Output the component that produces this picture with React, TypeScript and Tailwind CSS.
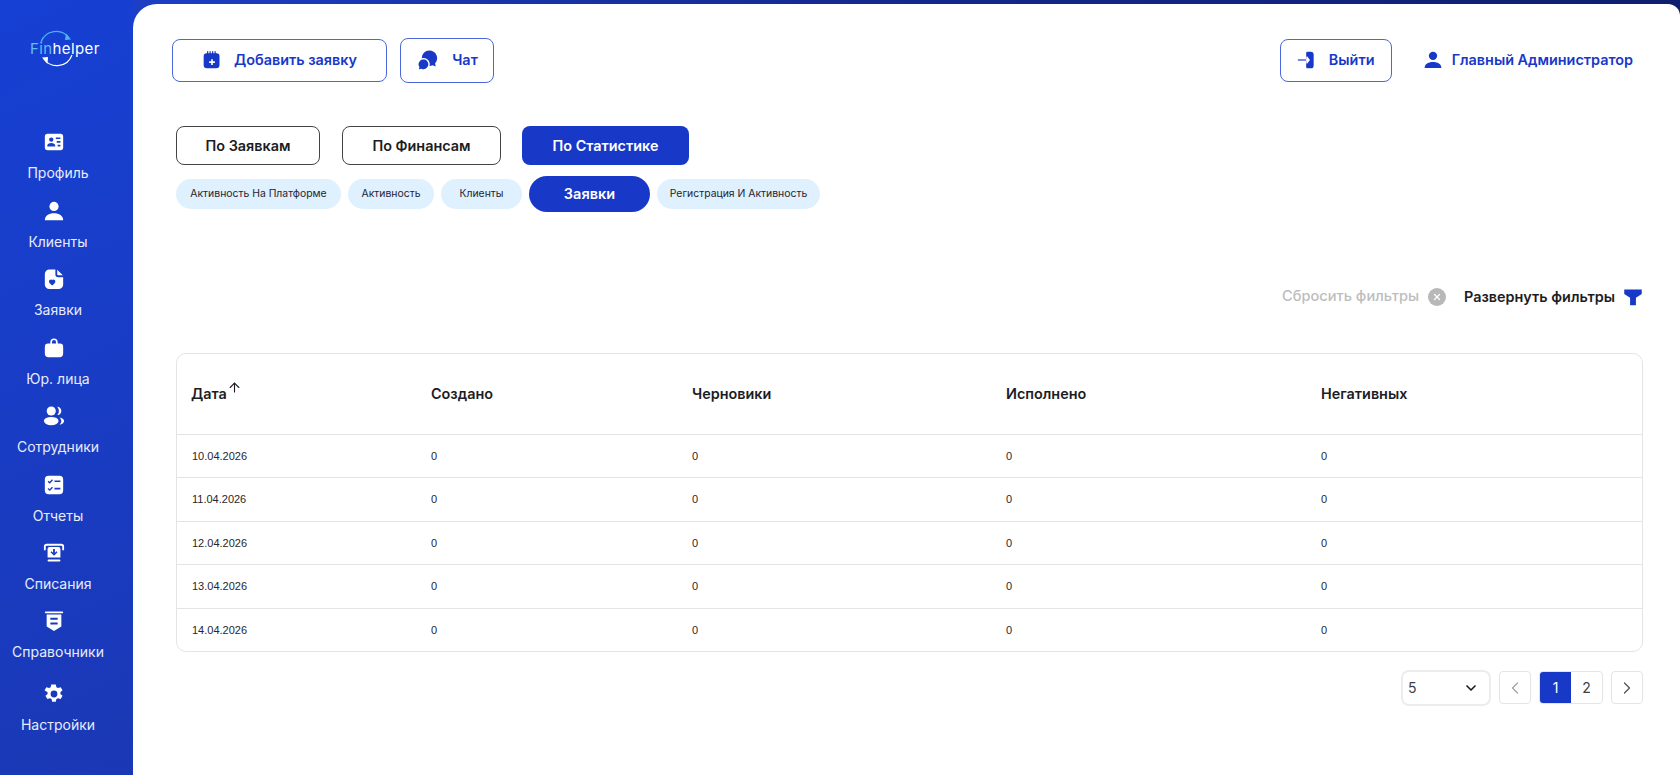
import { ArrowUp, ChevronDown, ChevronLeft, ChevronRight, X } from "lucide-react";
import type { ReactNode } from "react";

const fill = "#1838c8";

function Ico({ children, className = "w-6 h-6", color = "white" }: { children: ReactNode; className?: string; color?: string }) {
  return (
    <svg viewBox="0 0 24 24" className={className} fill={color}>
      {children}
    </svg>
  );
}

const navItems: { label: string; icon: ReactNode; h: string }[] = [
  {
    label: "Профиль",
    h: "h-[69px]",
    icon: (
      <path
        fillRule="evenodd"
        d="M5 3h14a3 3 0 0 1 3 3v12a3 3 0 0 1-3 3H5a3 3 0 0 1-3-3V6a3 3 0 0 1 3-3Zm4 4a2.4 2.4 0 1 0 0 4.8A2.4 2.4 0 0 0 9 7Zm0 6c-2.5 0-4.3 1.2-4.3 3v1h8.6v-1c0-1.8-1.8-3-4.3-3Zm5-6v1.8h5V7h-5Zm1 4v1.8h4V11h-4Zm1 4v1.8h3V15h-3Z"
      />
    ),
  },
  {
    label: "Клиенты",
    h: "h-[68px]",
    icon: (
      <>
        <circle cx="12" cy="7" r="5" />
        <path d="M2 22c0-4.8 4.5-7.500 10-7.500S22 17.200 22 22H2Z" />
      </>
    ),
  },
  {
    label: "Заявки",
    h: "h-[69px]",
    icon: (
      <path
        fillRule="evenodd"
        d="M7 1.500h6.500V7a3 3 0 0 0 3 3H22v8a5 5 0 0 1-5 5H7a5 5 0 0 1-5-5V6.500a5 5 0 0 1 5-5Zm8.500.4L21.600 8h-5a1.100 1.100 0 0 1-1.100-1.100v-5ZM9 12.500c-1.500 0-2.500 1-2.500 2.300 0 1.900 2.300 3.500 3.500 4.200 1.200-.7 3.500-2.300 3.500-4.200 0-1.300-1-2.300-2.300-2.300-.5 0-.9.200-1.200.500-.3-.3-.5-.5-1-.5Z"
      />
    ),
  },
  {
    label: "Юр. лица",
    h: "h-[68px]",
    icon: (
      <path d="M8 7V5.500a4 4 0 0 1 8 0V7h2.500A3.500 3.500 0 0 1 22 10.500V18a4 4 0 0 1-4 4H6a4 4 0 0 1-4-4v-7.500A3.500 3.500 0 0 1 5.500 7H8Zm1.800 0h4.400V5.500a2.200 2.200 0 0 0-4.400 0V7Z" />
    ),
  },
  {
    label: "Сотрудники",
    h: "h-[69px]",
    icon: (
      <>
        <circle cx="9" cy="6.500" r="5" />
        <path d="M15.500 2a4.500 4.500 0 0 1 0 9c1.200-1.200 1.800-2.800 1.800-4.500S16.700 3.200 15.500 2Z" />
        <ellipse cx="9" cy="17.500" rx="8" ry="4.500" />
        <path d="M18 13.500c2.800.3 5 1.900 5 4s-2.200 3.700-5 4c1.300-1.100 2-2.500 2-4s-.7-2.900-2-4Z" />
      </>
    ),
  },
  {
    label: "Отчеты",
    h: "h-[68px]",
    icon: (
      <path
        fillRule="evenodd"
        d="M6 2h12a4 4 0 0 1 4 4v12a4 4 0 0 1-4 4H6a4 4 0 0 1-4-4V6a4 4 0 0 1 4-4Zm6.500 5v1.800H19V7h-6.500Zm0 8v1.800H19V15h-6.500ZM9.800 5.800 7.300 8.500 6 7.300 5 8.400l2.400 2.200 3.500-3.700-1.100-1.100Zm0 8-2.500 2.700L6 15.300l-1 1.100 2.400 2.200 3.500-3.700-1.100-1.100Z"
      />
    ),
  },
  {
    label: "Списания",
    h: "h-[68px]",
    icon: (
      <>
        <path d="M4 2h16a3 3 0 0 1 3 3v4h-2V5a1 1 0 0 0-1-1H4a1 1 0 0 0-1 1v4H1V5a3 3 0 0 1 3-3Z" />
        <path
          fillRule="evenodd"
          d="M7 5.500h10a2 2 0 0 1 2 2V17H5V7.500a2 2 0 0 1 2-2Zm4 2v4.200L9.300 10l-1.100 1.100L12 15l3.800-3.900-1.100-1.100-1.700 1.700V7.500h-2Z"
        />
        <rect x="5" y="19.200" width="14" height="2" rx="1" />
      </>
    ),
  },
  {
    label: "Справочники",
    h: "h-[73px]",
    icon: (
      <>
        <rect x="2" y="1.500" width="20" height="2" rx="1" />
        <path
          fillRule="evenodd"
          d="M4 5h16v13l-8 5-8-5V5Zm4 3.500v2.200h8V8.500H8Zm0 5v2.200h8v-2.200H8Z"
        />
      </>
    ),
  },
  {
    label: "Настройки",
    h: "h-[70px]",
    icon: (
      <path
        fillRule="evenodd"
        d="M10 1.500h4l.6 3 1.800 1 2.900-1 2 3.500-2.300 2v2l2.300 2-2 3.500-2.900-1-1.800 1-.6 3h-4l-.6-3-1.800-1-2.900 1-2-3.500 2.300-2v-2L1.700 8l2-3.500 2.900 1 1.800-1 .6-3ZM12 8.300a3.700 3.700 0 1 0 0 7.400 3.700 3.700 0 0 0 0-7.400Z"
      />
    ),
  },
];

const subTabs = [
  { label: "Активность На Платформе", w: "w-[165px]" },
  { label: "Активность", w: "w-[86px]" },
  { label: "Клиенты", w: "w-[81px]" },
];

const rows = ["10.04.2026", "11.04.2026", "12.04.2026", "13.04.2026", "14.04.2026"];

const gridCols = "grid grid-cols-[240px_261px_314px_315px_1fr]";

function Logo() {
  return (
    <div className="relative h-[40px] w-[68px] text-[15px] leading-none tracking-[0.4px]">
      <svg viewBox="0 0 68 40" className="absolute inset-0 h-full w-full" fill="none" strokeWidth="1.200">
        <path d="M11 13A16 16 0 0 1 39 9" stroke="#4cb4f4" />
        <path d="M36 4.500 41 10.500l-6 .5Z" fill="#4cb4f4" />
        <path d="M42 26A16 16 0 0 1 14 30" stroke="white" />
        <path d="M17.500 35 12 28.500l6-.5Z" fill="white" />
      </svg>
      <span className="absolute left-0 top-[12px] whitespace-nowrap font-['Inter',sans-serif] font-normal">
        <span className="text-[#62bdf6]">Fin</span>
        <span className="text-white">helper</span>
      </span>
    </div>
  );
}

function TopButton({ children, className }: { children: ReactNode; className: string }) {
  return (
    <button className={`flex items-center justify-center rounded-lg border border-[#4a68dc] text-[14.4px] font-semibold text-[#1838c8] ${className}`}>
      {children}
    </button>
  );
}

export default function App() {
  return (
    <div className="flex h-[775px] w-[1680px] overflow-hidden bg-gradient-to-br from-[#1640d4] to-[#1c329c] font-['Inter',sans-serif]">
      <aside className="flex w-[133px] shrink-0 flex-col">
        <div className="ml-[30px] mt-[29px] h-[102px]">
          <Logo />
        </div>
        <nav className="flex w-[116px] flex-col items-center">
          {navItems.map((item) => (
            <div key={item.label} className={`flex flex-col items-center ${item.h}`}>
              <Ico className="mr-[8px] h-[22px] w-[22px]">{item.icon}</Ico>
              <span className="mt-[11px] whitespace-nowrap text-[14px] leading-[17px] text-[#e8ecfb]">{item.label}</span>
            </div>
          ))}
        </nav>
      </aside>

      <div className="flex min-w-0 flex-1 flex-col bg-gradient-to-r from-[#1c3fc4] via-[#14288c] to-[#0e1f6e] pt-[4px]">
        <main className="flex-1 rounded-tl-[24px] rounded-tr-[12px] bg-white pl-[39px] pr-[37px] pt-[34px]">
          <header className="flex h-[44px] items-center">
            <TopButton className="h-[43px] w-[215px] gap-[12px]">
              <Ico className="h-[20px] w-[20px]" color={fill}>
                <path
                  fillRule="evenodd"
                  d="M6 1.500h1.500V4H9V1.500h1.500V4H12V1.500h1.500V4H15V1.500h1.500V4h1a3.500 3.500 0 0 1 3.500 3.500V18a4 4 0 0 1-4 4H6a4 4 0 0 1-4-4V7.500A3.500 3.500 0 0 1 5.500 4H6V1.500ZM11 11v2.500H8.500v2H11V18h2v-2.500h2.500v-2H13V11h-2Z"
                />
              </Ico>
              Добавить заявку
            </TopButton>
            <TopButton className="ml-[13px] h-[45px] w-[94px] gap-[14px]">
              <Ico className="h-[22px] w-[22px]" color={fill}>
                <path d="M14.500 1.500a8.500 8.500 0 0 1 6.300 14.200l.7 3.300-3.300-1.200a8.500 8.500 0 0 1-12-7.800 8.500 8.500 0 0 1 8.300-8.500Z" />
                <path stroke="white" strokeWidth="1.600" d="M8 10.500a6.200 6.200 0 0 1 4.700 10.200 6.200 6.200 0 0 1-7.200 1.600l-3.500 1 .9-3.400A6.200 6.200 0 0 1 8 10.500Z" />
              </Ico>
              Чат
            </TopButton>
            <div className="ml-auto flex items-center">
              <TopButton className="h-[43px] w-[112px] gap-[12px]">
                <Ico className="h-[20px] w-[20px]" color={fill}>
                  <path d="M12.500 2h4A3.500 3.500 0 0 1 20 5.500v13a3.500 3.500 0 0 1-3.500 3.500h-4A1.500 1.500 0 0 1 11 20.500V14h1.200l-1.300 1.300 1.200 1.200L15.600 12l-3.500-4.500-1.200 1.200 1.300 1.300H11V3.500A1.500 1.500 0 0 1 12.500 2Z" />
                  <path d="M1 11.300h10v1.400H1z" />
                </Ico>
                Выйти
              </TopButton>
              <Ico className="ml-[31px] h-[20px] w-[20px]" color={fill}>
                <circle cx="12" cy="7" r="5" />
                <path d="M2 21.500c0-4.500 4.500-7 10-7s10 2.500 10 7H2Z" />
              </Ico>
              <span className="ml-[9px] mr-[10px] text-[14.4px] font-semibold text-[#1838c8]">Главный Администратор</span>
            </div>
          </header>

          <div className="ml-[4px] mt-[44px] flex h-[39px]">
            <button className="w-[144px] rounded-lg border border-[#444] text-[14.4px] font-semibold text-[#1c1c24]">По Заявкам</button>
            <button className="ml-[22px] w-[159px] rounded-lg border border-[#444] text-[14.4px] font-semibold text-[#1c1c24]">По Финансам</button>
            <button className="ml-[21px] w-[167px] rounded-lg bg-[#1838c8] text-[14.4px] font-semibold text-white">По Статистике</button>
          </div>

          <div className="ml-[4px] mt-[11px] flex items-center gap-[7px]">
            {subTabs.map((t) => (
              <span key={t.label} className={`flex h-[30px] ${t.w} items-center justify-center whitespace-nowrap rounded-full bg-[#dff0fe] text-[10.4px] text-[#1f2430]`}>
                {t.label}
              </span>
            ))}
            <span className="flex h-[36px] w-[121px] items-center justify-center rounded-full bg-[#1838c8] text-[14.5px] font-semibold text-white">Заявки</span>
            <span className="flex h-[30px] w-[163px] items-center justify-center whitespace-nowrap rounded-full bg-[#dff0fe] text-[10.4px] text-[#1f2430]">
              Регистрация И Активность
            </span>
          </div>

          <div className="mt-[71px] flex h-[28px] items-center justify-end">
            <span className="text-[14.6px] font-medium text-[#bdbdbd]">Сбросить фильтры</span>
            <span className="ml-[9px] flex h-[18px] w-[18px] items-center justify-center rounded-full bg-[#b8b8b8]">
              <X className="h-[10px] w-[10px] text-white" strokeWidth={3} />
            </span>
            <span className="ml-[18px] text-[14.4px] font-semibold text-[#1c1c24]">Развернуть фильтры</span>
            <Ico className="ml-[8px] h-[20px] w-[20px]" color={fill}>
              <path d="M1.500 3h21v5.500L15.500 13v9h-7v-9L1.500 8.500V3Z" />
            </Ico>
          </div>

          <div className="ml-[4px] mt-[42px] overflow-hidden rounded-[10px] border border-[#e4e4e7]">
            <div className={`${gridCols} h-[80px] items-center pl-[14px] text-[14.4px] font-semibold text-[#1c1c24]`}>
              <span className="flex items-start">
                Дата
                <ArrowUp className="-mt-[3px] h-[15px] w-[15px]" strokeWidth={1.8} />
              </span>
              <span>Создано</span>
              <span>Черновики</span>
              <span>Исполнено</span>
              <span>Негативных</span>
            </div>
            {rows.map((date) => (
              <div key={date} className={`${gridCols} h-[43.4px] items-center border-t border-[#e4e4e7] pl-[15px] font-['Liberation_Sans',sans-serif] text-[11px] text-[#27272a]`}>
                <span>{date}</span>
                <span className="-ml-px">0</span>
                <span className="-ml-px">0</span>
                <span className="-ml-px">0</span>
                <span className="-ml-px">0</span>
              </div>
            ))}
          </div>

          <div className="mt-[18px] flex items-center justify-end">
            <div className="flex h-[36px] w-[90px] items-center justify-between rounded-lg border-2 border-[#ececee] pl-[5px] pr-[10px] text-[14px] text-[#3f3f46]">
              5
              <ChevronDown className="h-[16px] w-[16px] text-[#1c1c24]" strokeWidth={2.5} />
            </div>
            <button className="ml-[8px] flex h-[33px] w-[32px] items-center justify-center rounded border border-[#e4e4e7]">
              <ChevronLeft className="h-[20px] w-[20px] text-[#a1a1aa]" strokeWidth={1.5} />
            </button>
            <div className="ml-[8px] flex h-[33px] overflow-hidden rounded border border-[#e4e4e7] text-[14px]">
              <span className="flex w-[31px] items-center justify-center bg-[#1838c8] text-white">1</span>
              <span className="flex w-[31px] items-center justify-center text-[#3f3f46]">2</span>
            </div>
            <button className="ml-[8px] flex h-[33px] w-[32px] items-center justify-center rounded border border-[#e4e4e7]">
              <ChevronRight className="h-[20px] w-[20px] text-[#52525b]" strokeWidth={1.5} />
            </button>
          </div>
        </main>
      </div>
    </div>
  );
}
